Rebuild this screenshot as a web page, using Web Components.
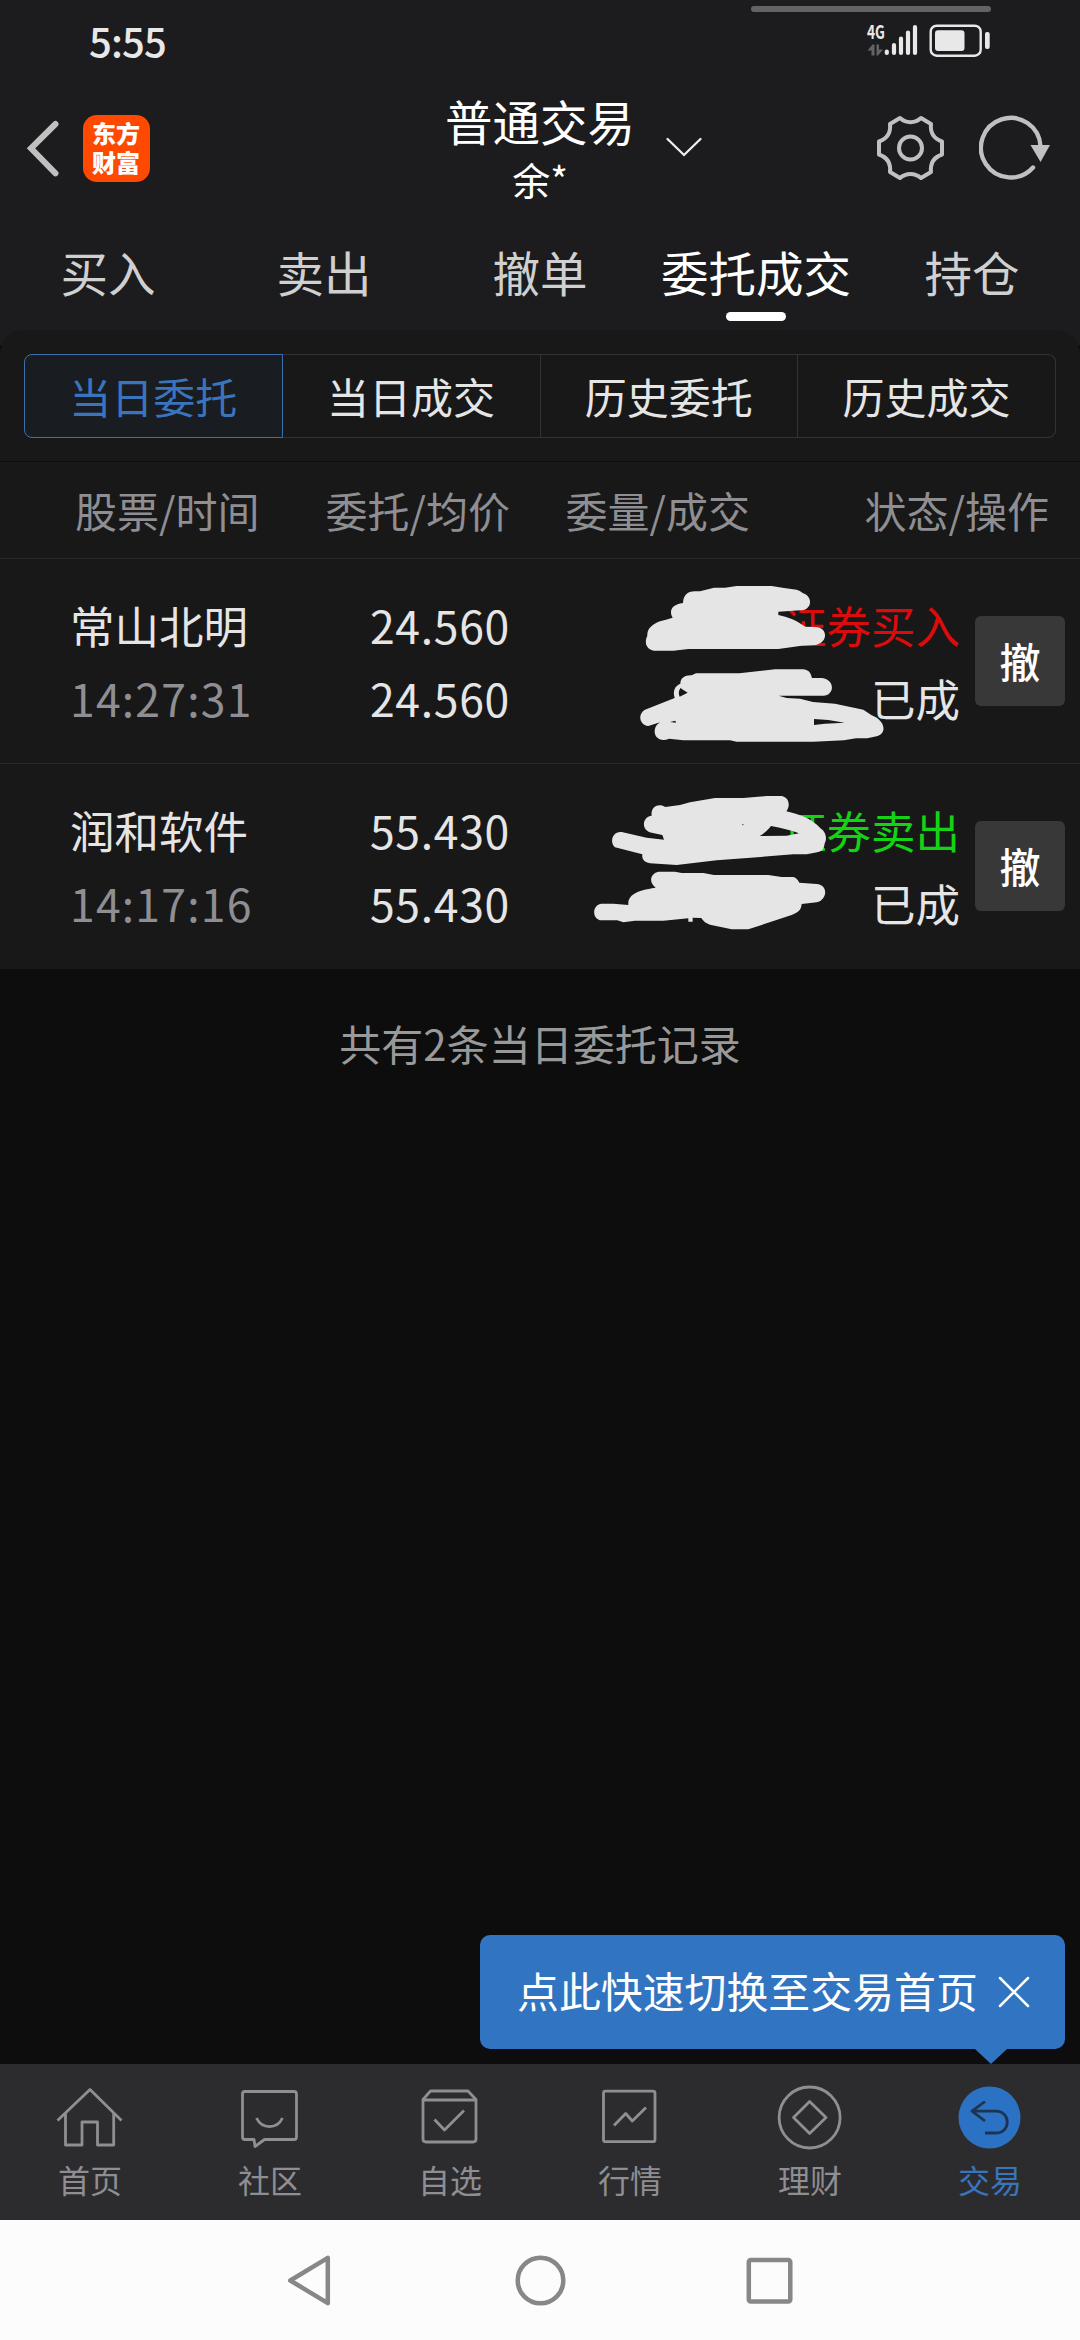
<!DOCTYPE html>
<html lang="zh-CN">
<head>
<meta charset="utf-8">
<title>普通交易</title>
<style>
  body {
    margin: 0;
    background: #0d0d0d;
    font-family: "Noto Sans CJK SC", sans-serif;
  }
</style>
</head>
<body>
<trade-app></trade-app>

<script>
class BaseElement extends HTMLElement {

  constructor() {
    super();
    this.__shadowRoot = this.attachShadow({ mode: 'open' });
    const template = document.createElement('template');
    template.innerHTML = this.constructor.template();
    this.__shadowRoot.appendChild(template.content.cloneNode(true));
  }
}

class StatusBar extends BaseElement {

  static template () {
    return `
      <style>
        :host {
          display: flex;
          justify-content: space-between;
          height: 80px;
          padding: 0 88px 0 89px;
          box-sizing: border-box;
          color: #e8e8e8;
        }
        span {
          font-size: 40px;
          line-height: 81px;
          font-weight: 500;
          letter-spacing: -.8px;
        }
        svg {
          display: block;
        }
      </style>
      <span>5:55</span>
      <svg width="243" height="80" viewBox="749 0 243 80" fill="#e8e8e8">
        <rect x="751" y="6" width="240" height="6" rx="3" fill="#636365"/>
        <text x="867" y="38.5" font-size="19" font-weight="700" textLength="18" lengthAdjust="spacingAndGlyphs">4G</text>
        <path d="M867.500 50.500l5-6h2v11h-3v-5zM876.500 44.500h2.500v5h4l-5 6h-1.500z" fill="#636365"/>
        <g stroke="#e8e8e8" stroke-width="4.200" stroke-linecap="round">
          <path d="M886.800 51.500v1.400M894 45v8M901 38.500v14.500M908 32.500v20.500M915 27v26"/>
        </g>
        <rect x="930.700" y="25.700" width="50" height="30" rx="6" fill="none" stroke="#e8e8e8" stroke-width="2.400"/>
        <rect x="935" y="30.300" width="29.500" height="20.700" rx="3"/>
        <rect x="985" y="32" width="4.700" height="17" rx="2"/>
      </svg>
    `;
  }
}

class TradeHeader extends BaseElement {

  static template () {
    return `
      <style>
        :host {
          display: grid;
          grid-template-columns: 1fr 194px 1fr;
          align-items: center;
          height: 136px;
          color: #fff;
        }
        .left {
          display: flex;
          align-items: center;
          gap: 23px;
          padding-left: 26px;
        }
        .right {
          display: flex;
          align-items: center;
          padding: 0 28px;
        }
        .logo {
          width: 67px;
          height: 67px;
          padding: 3px 9px 0;
          box-sizing: border-box;
          border-radius: 14px;
          background: #ff4800;
          font-size: 24px;
          line-height: 29px;
          font-weight: 900;
        }
        .title {
          text-align: center;
          padding-top: 2px;
        }
        h1 {
          margin: 0;
          font-size: 47.500px;
          font-weight: 400;
          line-height: 60px;
          white-space: nowrap;
        }
        .user {
          font-size: 38px;
          line-height: 56px;
        }
        svg {
          display: block;
          fill: none;
          stroke: #c0c0c0;
        }
        .gear {
          margin-left: auto;
          margin-right: 34px;
        }
      </style>
      <div class="left">
        <svg width="34" height="58" viewBox="26 119 34 58" stroke-width="6" stroke-linecap="round"><path d="M55.500 124L31 148.300l24.500 25"/></svg>
        <div class="logo">东方财富</div>
      </div>
      <div class="title">
        <h1><slot></slot></h1>
        <div class="user"><slot name="user"></slot></div>
      </div>
      <div class="right">
        <svg width="38" height="38" viewBox="665 129 38 38" stroke-width="2.300" stroke-linecap="round" style="stroke:#eee"><path d="M667.500 139L684 155l16.500-16"/></svg>
        <svg class="gear" width="68" height="68" viewBox="877 114 68 68" stroke-width="4" stroke-linejoin="round">
          <path d="M900 118C906 123.500 915 123.500 921 118L931 124C930 133 933.500 138.500 942 141.500V154.500C933.500 157.500 930 163 931 172L921 178C915 172.500 906 172.500 900 178L890 172C891 163 887.500 157.500 879 154.500V141.500C887.500 138.500 891 133 890 124Z"/>
          <circle cx="910.500" cy="148" r="11.500"/>
        </svg>
        <svg width="73" height="68" viewBox="979 114 73 68" stroke-width="4.400" stroke-linecap="round">
          <path d="M1040.500 146A29.800 29.800 0 1 0 1033 167.500"/>
          <path d="M1030.500 145h19.500l-9.500 17z" fill="#c0c0c0" stroke="none"/>
        </svg>
      </div>
    `;
  }
}

class TradeTab extends BaseElement {

  static template () {
    return `
      <style>
        :host {
          display: flex;
          flex-direction: column;
          align-items: center;
          color: #d0d0d0;
          font-size: 47.500px;
          line-height: 72px;
          padding-top: 20px;
        }
        :host([active]) {
          color: #fff;
        }
        :host([active])::after {
          content: "";
          width: 60px;
          height: 9px;
          margin-top: 4px;
          border-radius: 5px;
          background: #fff;
        }
      </style>
      <slot></slot>
    `;
  }
}

class SegmentItem extends BaseElement {

  static template () {
    return `
      <style>
        :host {
          flex: 1;
          box-sizing: border-box;
          border: 1px solid #333;
          border-left-width: 0;
          text-align: center;
          font-size: 42px;
          line-height: 82px;
          height: 84px;
          color: #e5e5e5;
        }
        :host(:last-of-type) {
          border-radius: 0 8px 8px 0;
        }
        :host([active]) {
          border: 1px solid #3d71ad;
          border-radius: 8px 0 0 8px;
          background: #191c20;
          color: #3974bd;
        }
      </style>
      <slot></slot>
    `;
  }
}

class OrderRow extends BaseElement {

  static template () {
    return `
      <style>
        :host {
          display: grid;
          grid-template-columns: 200px 240px 450px 90px;
          position: relative;
          height: 205px;
          box-sizing: border-box;
          padding: 29px 15px 0 70px;
          border-bottom: 1px solid #292929;
          background: #181818;
          color: #e5e5e5;
          font-size: 44.500px;
          line-height: 73px;
          white-space: nowrap;
        }
        :host(:last-of-type) {
          border-bottom-color: #181818;
        }
        .right {
          text-align: right;
        }
        .price {
          letter-spacing: .7px;
        }
        .time {
          color: #8e8e93;
          letter-spacing: 1.200px;
        }
        .side {
          color: #dc0c0c;
        }
        :host([side="sell"]) .side {
          color: #14d214;
        }
        button {
          width: 90px;
          height: 90px;
          margin: 28px 0 0 15px;
          padding: 0 0 3px;
          border: 0;
          border-radius: 6px;
          background: #383838;
          color: #fff;
          font: 500 41px "Noto Sans CJK SC", sans-serif;
        }
        ::slotted(svg) {
          position: absolute;
          left: 580px;
          top: 0;
          fill: #e5e5e5;
        }
      </style>
      <div>
        <div><slot name="stock"></slot></div>
        <div class="time"><slot name="time"></slot></div>
      </div>
      <div class="right price">
        <div><slot name="price"></slot></div>
        <div><slot name="average"></slot></div>
      </div>
      <div class="right">
        <div class="side"><slot name="action"></slot></div>
        <div><slot name="state"></slot></div>
      </div>
      <button>撤</button>
      <slot></slot>
    `;
  }
}

class TipBubble extends BaseElement {

  static template () {
    return `
      <style>
        :host {
          position: absolute;
          right: 15px;
          bottom: 15px;
          display: flex;
          align-items: center;
          justify-content: space-between;
          width: 585px;
          height: 114px;
          box-sizing: border-box;
          padding: 0 35px 0 37px;
          border-radius: 10px;
          background: #3174c1;
          color: #fff;
          font-size: 41.900px;
          white-space: nowrap;
        }
        span {
          margin-top: -5px;
        }
        :host::after {
          content: "";
          position: absolute;
          right: 58px;
          top: 100%;
          border: 16px solid transparent;
          border-top: 15px solid #3174c1;
          border-bottom: 0;
        }
      </style>
      <span><slot></slot></span>
      <svg width="32" height="32" viewBox="0 0 32 32" stroke="#fff" stroke-width="2.500" stroke-linecap="round"><path d="M2 2l28 28M30 2L2 30"/></svg>
    `;
  }
}

class NavItem extends BaseElement {

  static template () {
    return `
      <style>
        :host {
          display: flex;
          flex-direction: column;
          align-items: center;
          padding-top: 18px;
          color: #8e8e93;
          font-size: 32px;
          line-height: 46px;
        }
        :host([active]) {
          color: #3974bd;
        }
        ::slotted(svg) {
          width: 70px;
          height: 70px;
          margin-bottom: 4px;
          fill: none;
          stroke: #8e8e93;
          stroke-width: 2.800px;
          stroke-linejoin: round;
        }
      </style>
      <slot name="icon"></slot>
      <slot></slot>
    `;
  }
}

class SystemNav extends BaseElement {

  static template () {
    return `
      <style>
        :host {
          display: flex;
          justify-content: center;
          align-items: center;
          gap: 176px;
          height: 120px;
          background: #fcfcfc;
        }
        svg {
          width: 53px;
          height: 53px;
          fill: none;
          stroke: #878787;
          stroke-width: 4.500px;
          stroke-linejoin: round;
        }
      </style>
      <svg viewBox="284.500 2253.500 53 53"><path d="M327.300 2257.300v45.400l-37.500-22.700z"/></svg>
      <svg viewBox="513.500 2253.500 53 53"><circle cx="540" cy="2280" r="22.800"/></svg>
      <svg viewBox="742.500 2253.500 53 53"><rect x="748.300" y="2259.500" width="41.500" height="41.500" rx="2"/></svg>
    `;
  }
}

class TradeApp extends BaseElement {

  static template () {
    return `
      <style>
        :host {
          display: flex;
          flex-direction: column;
          height: 2340px;
        }
        .top {
          height: 330px;
          background: #1c1c1e;
        }
        .tabs {
          display: grid;
          grid-template-columns: repeat(5, 216px);
        }
        .corners {
          background: linear-gradient(#1c1c1e 15px, #0d0d0d 15px);
        }
        .segments {
          display: flex;
          height: 131px;
          box-sizing: border-box;
          padding: 24px 24px 0;
          border-radius: 24px 24px 0 0;
          background: #181818;
        }
        .columns {
          display: grid;
          grid-template-columns: 195px 240px 240px 299px;
          height: 98px;
          box-sizing: border-box;
          padding-left: 75px;
          border-top: 1px solid #0d0d0d;
          border-bottom: 1px solid #292929;
          background: #181818;
          color: #8e8e93;
          font-size: 42px;
          line-height: 96px;
          white-space: nowrap;
        }
        .columns > :nth-child(n+2) {
          text-align: right;
        }
        .summary {
          margin-top: 43px;
          color: #999;
          font-size: 42px;
          line-height: 62px;
          text-align: center;
        }
        .bottom {
          position: relative;
          margin-top: auto;
        }
        nav {
          display: grid;
          grid-template-columns: repeat(6, 180px);
          height: 156px;
          background: #2c2c2e;
        }
        .bubble {
          position: relative;
        }
        .solid {
          fill: #2b72c4;
          stroke: none;
        }
        .back {
          stroke: #1d3450;
        }
      </style>
      <div class="top">
        <status-bar></status-bar>
        <trade-header>普通交易<span slot="user">余*</span></trade-header>
        <div class="tabs">
          <trade-tab>买入</trade-tab>
          <trade-tab>卖出</trade-tab>
          <trade-tab>撤单</trade-tab>
          <trade-tab active>委托成交</trade-tab>
          <trade-tab>持仓</trade-tab>
        </div>
      </div>
      <div class="corners">
        <div class="segments">
          <segment-item active>当日委托</segment-item>
          <segment-item>当日成交</segment-item>
          <segment-item>历史委托</segment-item>
          <segment-item>历史成交</segment-item>
        </div>
      </div>
      <div class="columns">
        <span>股票/时间</span>
        <span>委托/均价</span>
        <span>委量/成交</span>
        <span>状态/操作</span>
      </div>
      <order-row side="buy">
        <span slot="stock">常山北明</span><span slot="time">14:27:31</span>
        <span slot="price">24.560</span><span slot="average">24.560</span>
        <span slot="action">证券买入</span><span slot="state">已成</span>
        <svg width="500" height="200" viewBox="0 -3 1500 600">
          <path d="M222 272C199 268 192 248 202 227C201 208 213 195 240 184Q257 179 278 173C266 153 275 133 309 129C309 108 321 94 345 94H360L402 83H435L470 78H575L612 84L650 89Q660 91 668 99C701 109 696 152 660 151L595 155V165C629 172 651 183 676 200L705 201C745 201 745 249 706 255L665 257L595 267H325L280 272Z"/>
          <path fill-rule="evenodd" d="M205 498C178 495 172 462 195 449L284 414C278 396 283 378 301 371C301 354 315 345 335 346L348 340H478L585 328H670Q691 329 696 354H723C766 356 765 406 730 407H596L620 414L660 416L699 426L765 431L850 449L875 466C915 481 923 520 890 529L862 535H828L792 541L700 545H470L450 541H310L267 536C247 546 225 536 224 516C224 501 230 494 240 487ZM301 384L323 398L299 410Q293 398 301 384ZM702 477V495L735 491L794 488L745 480ZM270 486L286 482L288 488Z"/>
        </svg>
      </order-row>
      <order-row side="sell">
        <span slot="stock">润和软件</span><span slot="time">14:17:16</span>
        <span slot="price">55.430</span><span slot="average">55.430</span>
        <span slot="action">证券卖出</span><span slot="state">已成</span>
        <svg width="500" height="205" viewBox="0 12 1500 615">
          <path fill-rule="evenodd" d="M105 262C87 246 98 213 125 216L200 233L252 239L247 225L215 218C182 212 186 170 215 167C211 139 237 128 256 141L300 135L330 127L405 114H490L560 108H603C626 110 633 136 619 154C658 163 691 173 723 206C739 216 741 238 734 250C732 270 725 276 704 278L680 283H640L410 301L290 315L210 310C192 307 185 297 187 283ZM573 198C563 211 552 221 539 228L620 227L657 220Q620 206 573 198ZM486 194l3-3 2 5z"/>
          <path d="M65 431H100L145 435C143 407 164 392 227 383C204 366 212 339 236 335H285L305 339H370L402 345H565L605 351H637Q650 351 658 368L710 372C747 375 741 421 710 427L665 432C664 450 654 457 635 465L505 508H455L390 494Q373 489 364 474L338 473V485H325V475L250 482H165L130 487L112 481H65C35 479 35 434 65 431Z"/>
        </svg>
      </order-row>
      <div class="summary">共有2条当日委托记录</div>
      <div class="bottom">
        <div class="bubble"><tip-bubble>点此快速切换至交易首页</tip-bubble></div>
        <nav>
          <nav-item>
            <svg slot="icon" viewBox="55 2082 70 70"><path d="M57.500 2120.500L90 2089.500L121.500 2120.500M65.500 2113V2145H82V2122H97.500V2145H113.700V2113"/></svg>首页
          </nav-item>
          <nav-item>
            <svg slot="icon" viewBox="235 2082 70 70"><path d="M245 2091.500H294Q296.500 2091.500 296.500 2094V2137Q296.500 2139.500 294 2139.500H264.500L255 2146.500L254 2139.500H245Q242.500 2139.500 242.500 2137V2094Q242.500 2091.500 245 2091.500ZM256.500 2118C262 2129.500 277 2129.500 282.500 2118"/></svg>社区
          </nav-item>
          <nav-item>
            <svg slot="icon" viewBox="415 2082 70 70"><path d="M423 2099.500L430.500 2091H468L476 2099.500V2139Q476 2142 473 2142H426Q423 2142 423 2139ZM423 2100H476M434.500 2119.500L444.500 2130L464 2110.500"/></svg>自选
          </nav-item>
          <nav-item>
            <svg slot="icon" viewBox="595 2082 70 70"><rect x="603.500" y="2091.200" width="51.500" height="50.500" rx="2"/><path d="M614 2125.500L625.700 2113.500L632.300 2121L646 2107.500"/></svg>行情
          </nav-item>
          <nav-item>
            <svg slot="icon" viewBox="775 2082 70 70"><circle cx="809.600" cy="2117.500" r="30.500"/><path d="M809.600 2101.500L826 2117.500L809.600 2133.500L793.500 2117.500Z"/></svg>理财
          </nav-item>
          <nav-item active>
            <svg slot="icon" viewBox="955 2082 70 70"><circle class="solid" cx="989.500" cy="2117.500" r="31"/><path class="back" d="M985 2101.500L972 2111.200L985 2121M972 2111.200H996C1011 2111.200 1011 2133 996 2133H985"/></svg>交易
          </nav-item>
        </nav>
        <system-nav></system-nav>
      </div>
    `;
  }
}

customElements.define('status-bar', StatusBar);
customElements.define('trade-header', TradeHeader);
customElements.define('trade-tab', TradeTab);
customElements.define('segment-item', SegmentItem);
customElements.define('order-row', OrderRow);
customElements.define('tip-bubble', TipBubble);
customElements.define('nav-item', NavItem);
customElements.define('system-nav', SystemNav);
customElements.define('trade-app', TradeApp);
</script>
</body>
</html>
